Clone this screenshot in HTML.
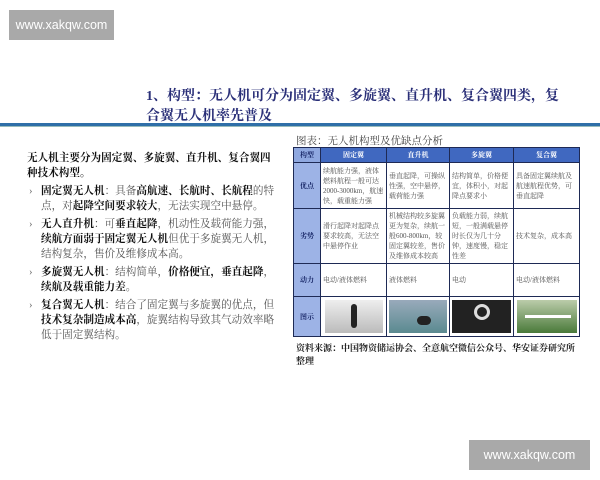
<!DOCTYPE html>
<html><head><meta charset="utf-8"><style>
*{margin:0;padding:0;box-sizing:border-box}
body{width:600px;height:480px;background:#fff;position:relative;overflow:hidden;font-family:"Liberation Serif","Noto Serif CJK SC",serif;color:#333}
.wm{position:absolute;background:#a9a9a9;color:#fff;font-family:"Liberation Sans",sans-serif;font-size:12.5px;display:flex;align-items:center;justify-content:center}
.title{position:absolute;left:146px;top:87px;font-size:14px;font-weight:bold;color:#2a2f78;line-height:20px;width:420px}
.line{position:absolute;left:0;top:123px;width:600px;height:4px;background:#2f6fa8;border-bottom:1px solid #9bb}
.left{position:absolute;left:27px;top:151px;width:252px;font-size:10.6px;line-height:15px;color:#555}
.left b{color:#111}
.left p{margin-bottom:3px}
.li{padding-left:14px;position:relative}
.li:before{content:"›";position:absolute;left:2px;top:0;color:#666}
.cap{position:absolute;left:296px;top:133px;font-size:10.5px;color:#444}
table{position:absolute;left:293px;top:147px;width:286px;table-layout:fixed;border-collapse:collapse;font-size:7px;color:#555;line-height:10px;font-family:"Liberation Serif","Noto Serif CJK SC",serif}
td{border:1px solid #1e2a55;padding:0 2px;vertical-align:middle;overflow:hidden}
td div.c{overflow:hidden;display:flex;align-items:center}
tr.h td{background:#4068c0;color:#fff;font-weight:bold;text-align:center;height:15px}
tr.h td:first-child{background:#8fa8e0;color:#1b2a6a}
td.l{background:#9db3e6;color:#1b2a6a;font-weight:bold;text-align:center}
.src{position:absolute;left:296px;top:342px;font-size:9px;font-weight:bold;color:#222;line-height:13px;width:282px}
.img{height:33px;margin:0 auto}
</style></head><body>
<div class="wm" style="left:9px;top:10px;width:105px;height:30px">www.xakqw.com</div>
<div class="wm" style="left:469px;top:440px;width:121px;height:30px">www.xakqw.com</div>
<div class="title">1、构型：无人机可分为固定翼、多旋翼、直升机、复合翼四类，复合翼无人机率先普及</div>
<div class="line"></div>
<div class="left">
<p><b>无人机主要分为固定翼、多旋翼、直升机、复合翼四种技术构型。</b></p>
<p class="li"><b>固定翼无人机</b>：具备<b>高航速、长航时、长航程</b>的特点，对<b>起降空间要求较大</b>，无法实现空中悬停。</p>
<p class="li"><b>无人直升机</b>：可<b>垂直起降</b>，机动性及载荷能力强，<b>续航方面弱于固定翼无人机</b>但优于多旋翼无人机，结构复杂，售价及维修成本高。</p>
<p class="li"><b>多旋翼无人机</b>：结构简单，<b>价格便宜，垂直起降</b>，<b>续航及载重能力差</b>。</p>
<p class="li"><b>复合翼无人机</b>：结合了固定翼与多旋翼的优点，但<b>技术复杂制造成本高</b>，旋翼结构导致其气动效率略低于固定翼结构。</p>
</div>
<div class="cap">图表：无人机构型及优缺点分析</div>
<table>
<colgroup><col style="width:27px"><col style="width:66px"><col style="width:63px"><col style="width:64px"><col style="width:66px"></colgroup>
<tr class="h"><td>构型</td><td>固定翼</td><td>直升机</td><td>多旋翼</td><td>复合翼</td></tr>
<tr><td class="l">优点</td><td><div class="c" style="height:45px">续航能力强，液体燃料航程一般可达2000-3000km，航速快，载重能力强</div></td><td><div class="c" style="height:45px">垂直起降，可操纵性强，空中悬停，载荷能力强</div></td><td><div class="c" style="height:45px">结构简单，价格便宜，体积小，对起降点要求小</div></td><td><div class="c" style="height:45px">具备固定翼续航及航速航程优势，可垂直起降</div></td></tr>
<tr><td class="l">劣势</td><td><div class="c" style="height:54px">滑行起降对起降点要求较高，无法空中悬停作业</div></td><td><div class="c" style="height:54px">机械结构较多旋翼更为复杂，续航一般600-800km，较固定翼较差，售价及维修成本较高</div></td><td><div class="c" style="height:54px">负载能力弱，续航短，一般满载悬停时长仅为几十分钟，速度慢，稳定性差</div></td><td><div class="c" style="height:54px">技术复杂，成本高</div></td></tr>
<tr><td class="l">动力</td><td><div class="c" style="height:32px">电动/液体燃料</div></td><td><div class="c" style="height:32px">液体燃料</div></td><td><div class="c" style="height:32px">电动</div></td><td><div class="c" style="height:32px">电动/液体燃料</div></td></tr>
<tr><td class="l">图示</td>
<td><div class="c" style="height:39px"><div class="img" style="width:58px;background:linear-gradient(#eee,#bbb);position:relative"><div style="position:absolute;left:26px;top:4px;width:6px;height:24px;background:#222;border-radius:3px"></div></div></div></td>
<td><div class="c" style="height:39px"><div class="img" style="width:58px;background:linear-gradient(#9ab,#5a8a90);position:relative"><div style="position:absolute;left:28px;top:16px;width:14px;height:9px;background:#222;border-radius:5px"></div></div></div></td>
<td><div class="c" style="height:39px"><div class="img" style="width:60px;background:#222;position:relative"><div style="position:absolute;left:22px;top:4px;width:16px;height:16px;border:3px solid #ddd;border-radius:50%"></div></div></div></td>
<td><div class="c" style="height:39px"><div class="img" style="width:60px;background:linear-gradient(#bca,#4a7a3a);position:relative"><div style="position:absolute;left:8px;top:15px;width:46px;height:3px;background:#fff"></div></div></div></td>
</tr>
</table>
<div class="src">资料来源：中国物资储运协会、全意航空微信公众号、华安证券研究所整理</div>
</body></html>
